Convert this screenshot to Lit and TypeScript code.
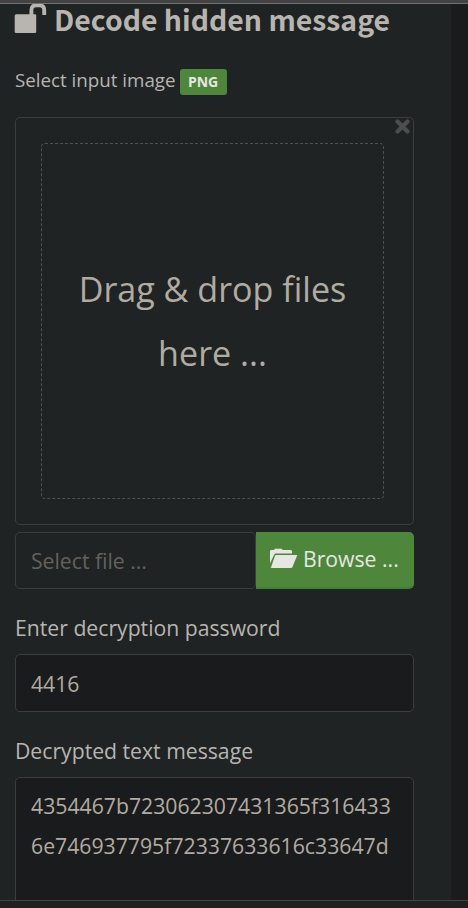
import { LitElement, html, css } from "lit";
import { customElement } from "lit/decorators.js";

const unlockIcon = html`<svg class="unlock" viewBox="0 0 33 30" aria-hidden="true">
  <path d="M1.2 10.2H20Q21.2 10.2 21.2 11.4V27.8Q21.2 29 20 29H1Q-.3 29 -.3 27.8V11.7Q-.3 10.2 1.2 10.2Z" fill="currentColor" />
  <path d="M16.4 11.5V6.2Q16.4 1.4 21 1.4H24.7Q29.2 1.4 29.2 6.2V10.9" fill="none" stroke="currentColor" stroke-width="3.9" />
</svg>`;

const folderIcon = html`<svg class="folder" viewBox="0 0 28 21" aria-hidden="true">
  <path d="M0 15.5V3.2Q0 2 1.2 2H4L5 .8H11.6L12.7 2H20.5Q22 2 22 3.4V5.6H6Q4.6 5.6 4 7Z" fill="currentColor" />
  <path d="M6.1 7H27.3L22.4 19.2Q22 20 21 20H.8L5 7.8Q5.3 7 6.1 7Z" fill="currentColor" />
</svg>`;

@customElement("app-root")
export class AppRoot extends LitElement {
  static styles = css`
    :host {
      display: flex;
      flex-direction: column;
      height: 908px;
      width: 468px;
      overflow: hidden;
      background: #1a1b1d;
      color: #b8b5b0;
      font-family: "Open Sans", sans-serif;
      font-size: 21.2px;
      white-space: nowrap;
    }
    * { box-sizing: border-box; }
    .top { flex: none; height: 4px; background: #434343; border-bottom: 1px solid #717171; }
    .bottom { flex: none; height: 8px; background: #202020; border-top: 1px solid #454545; }
    .panel {
      flex: 1;
      min-height: 0;
      width: 451px;
      overflow: hidden;
      padding: 0 37px 0 15px;
      background: #1f2324;
    }
    h1 {
      display: flex;
      height: 40px;
      margin: 0;
      font: 700 28.4px/30px "Noto Sans CJK SC", sans-serif;
    }
    .unlock { flex: none; width: 33px; height: 30px; margin: 0 6px 0 0; overflow: visible; }
    .label { display: flex; align-items: center; height: 28px; padding-bottom: 2px; }
    .first { margin-top: 22px; font-size: 18.75px; }
    .badge {
      display: flex;
      flex: none;
      align-items: center;
      justify-content: center;
      width: 47px;
      height: 26px;
      margin: 5px 0 0 4px;
      border-radius: 3px;
      background: #4e873b;
      color: #e8e6e3;
      font-size: 14px;
      font-weight: 700;
    }
    .drop {
      position: relative;
      height: 408px;
      margin-top: 23px;
      padding: 25px 29px 25px 25px;
      border: 1px solid #3b3e3f;
      border-radius: 5px;
    }
    .close { position: absolute; top: 0.5px; right: 3px; width: 15px; height: 15px; color: #4c4e4f; }
    .zone {
      display: flex;
      align-items: center;
      justify-content: center;
      height: 356px;
      border: 1px dashed #4e5152;
      border-radius: 4px;
      color: #b2aba1;
      font-size: 34.1px;
      line-height: 64px;
      text-align: center;
    }
    .files { display: flex; height: 57px; margin-top: 7px; }
    .field {
      display: flex;
      align-items: center;
      height: 58px;
      padding: 0 15px;
      border: 1px solid #3b3e3f;
      border-radius: 5px;
      background: #1a1b1d;
      color: #b2aba1;
    }
    .caption { flex: 1; height: 57px; background: none; color: #65615b; }
    .browse {
      display: flex;
      align-items: center;
      width: 158px;
      padding: 0 0 2px 14px;
      border-bottom: 2px solid #3c8136;
      border-radius: 0 5px 5px 0;
      background: #4e873b;
      color: #e8e6e3;
    }
    .folder { flex: none; width: 28px; height: 21px; margin: 0 5px 0 0; }
    .password, .message { margin: 25px 0 12px; }
    .output {
      display: block;
      height: 180px;
      padding: 8px 15px;
      line-height: 40px;
      font-size: 21.22px;
    }
  `;

  render() {
    return html`
      <div class="top"></div>
      <main class="panel">
        <h1>${unlockIcon}<span class="title">Decode hidden message</span></h1>
        <div class="label first"><span>Select input image</span><span class="badge">PNG</span></div>
        <div class="drop">
          <svg class="close" viewBox="0 0 15 15"><path d="M2.5 2.5L12.5 12.5M12.5 2.5L2.5 12.5" stroke="currentColor" stroke-width="4.2" stroke-linecap="round" /></svg>
          <div class="zone"><div>Drag &amp; drop files<br />here ...</div></div>
        </div>
        <div class="files">
          <div class="field caption">Select file ...</div>
          <div class="browse">${folderIcon}<span>Browse ...</span></div>
        </div>
        <div class="label password">Enter decryption password</div>
        <div class="field">4416</div>
        <div class="label message">Decrypted text message</div>
        <div class="field output">4354467b723062307431365f316433<br />6e746937795f72337633616c33647d</div>
      </main>
      <div class="bottom"></div>
    `;
  }
}
